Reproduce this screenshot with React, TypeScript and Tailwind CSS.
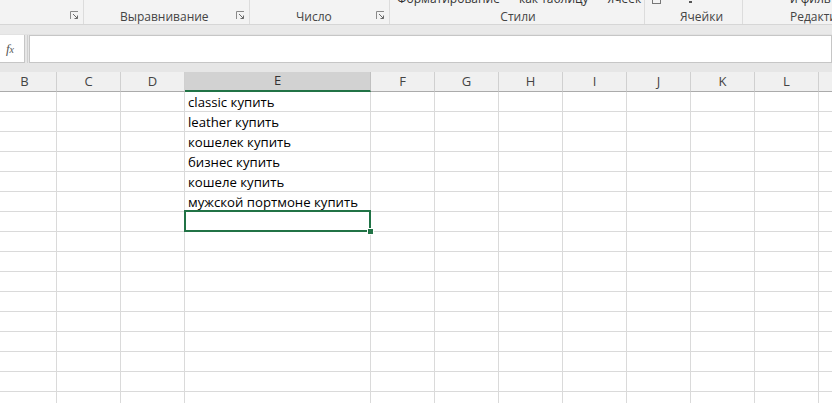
import React from "react";

const cols = [
  { name: "B", w: 64 },
  { name: "C", w: 64 },
  { name: "D", w: 64 },
  { name: "E", w: 186 },
  { name: "F", w: 64 },
  { name: "G", w: 64 },
  { name: "H", w: 64 },
  { name: "I", w: 64 },
  { name: "J", w: 64 },
  { name: "K", w: 64 },
  { name: "L", w: 64 },
  { name: "", w: 64 },
];

const data = [
  "classic купить",
  "leather купить",
  "кошелек купить",
  "бизнес купить",
  "кошеле купить",
  "мужской портмоне купить",
];

function Launcher() {
  return (
    <svg width="9" height="9" viewBox="0 0 9 9" className="shrink-0">
      <path d="M0.5 8 V0.5 H8" stroke="#8a8a8a" strokeWidth="1" fill="none" />
      <path d="M3 3 L7.5 7.5 M7.5 4.5 V7.5 H4.5" stroke="#6a6a6a" strokeWidth="1" fill="none" />
    </svg>
  );
}

const font = { fontFamily: '"Open Sans", "Noto Sans", sans-serif' };

export default function App() {
  const rowCount = 16;
  return (
    <div className="w-[832px] h-[403px] overflow-hidden bg-white" style={font}>
      {/* Ribbon */}
      <div className="h-[25px] bg-[#f3f3f3] border-b border-[#d6d6d6] flex text-[12px] text-[#444] overflow-hidden">
        <div className="w-[84px] shrink-0 border-r border-[#dcdcdc] h-[24px] flex items-end justify-end pr-[4px] pb-[4px]">
          <Launcher />
        </div>
        <div className="w-[166px] shrink-0 border-r border-[#dcdcdc] h-[24px] flex items-end pl-[36px] pr-[4px]">
          <span className="leading-[15px]">Выравнивание</span>
          <span className="ml-auto pb-[4px]"><Launcher /></span>
        </div>
        <div className="w-[140px] shrink-0 border-r border-[#dcdcdc] h-[24px] flex items-end pl-[46px] pr-[4px]">
          <span className="leading-[15px]">Число</span>
          <span className="ml-auto pb-[4px]"><Launcher /></span>
        </div>
        <div className="w-[255px] shrink-0 border-r border-[#dcdcdc] h-[24px] flex flex-col">
          <div className="flex text-[12px] leading-[12px] -mt-[7px] h-[12px] whitespace-nowrap text-[#333]">
            <span className="ml-[7px]">Форматирование</span>
            <span className="ml-[19px]">как таблицу</span>
            <span className="ml-[19px]">ячеек</span>
          </div>
          <div className="flex-1 flex items-end justify-center pl-[2px]">
            <span className="leading-[15px]">Стили</span>
          </div>
        </div>
        <div className="w-[98px] shrink-0 border-r border-[#dcdcdc] h-[24px] flex flex-col">
          <div className="flex items-start h-[5px] overflow-hidden">
            <div className="ml-[7px] -mt-[3px] w-[9px] h-[7px] border border-[#777]" />
            <div className="ml-[28px] mt-[1px] w-[3px] h-[2px] bg-[#555]" />
          </div>
          <div className="flex-1 flex items-end pl-[35px]">
            <span className="leading-[15px]">Ячейки</span>
          </div>
        </div>
        <div className="flex-1 h-[24px] flex flex-col">
          <div className="flex text-[12px] leading-[12px] -mt-[7px] h-[12px] whitespace-nowrap text-[#333] pl-[47px]">
            <span>и фильтр</span>
          </div>
          <div className="flex-1 flex items-end pl-[47px] whitespace-nowrap">
            <span className="leading-[15px]">Редактирование</span>
          </div>
        </div>
      </div>

      {/* band */}
      <div className="h-[10px] bg-[#e9e9e9] border-b border-[#e2e2e2]" />

      {/* formula bar */}
      <div className="h-[37px] bg-[#e6e6e6] flex items-start">
        <div className="w-[25px] h-[28px] bg-white border-r border-b border-[#c6c6c6] flex items-center justify-center">
          <span className="text-[13px] italic text-[#555] -ml-[4px]" style={{ fontFamily: '"Liberation Serif", serif' }}>
            f<span className="text-[10px]">x</span>
          </span>
        </div>
        <div className="w-[4px] h-[28px] flex justify-center">
          <div className="w-[1px] h-full bg-[#d0d0d0]" />
        </div>
        <div className="flex-1 h-[28px] bg-white border border-[#c6c6c6]" />
      </div>

      {/* sheet */}
      <div className="flex flex-col -ml-[7px]">
        {/* header row */}
        <div className="flex h-[20px]">
          {cols.map((c, i) => (
            <div
              key={i}
              className={
                c.name === "E"
                  ? "shrink-0 h-[20px] bg-[#d2d2d2] border-b-2 border-b-[#217346] border-r border-r-[#c0c0c0] flex items-center justify-center text-[13px] text-[#333]"
                  : "shrink-0 h-[20px] bg-[#f0f0f0] border-b border-b-[#ababab] border-r border-r-[#d0d0d0] flex items-center justify-center text-[13px] text-[#444]"
              }
              style={{ width: c.w }}
            >
              {c.name}
            </div>
          ))}
        </div>
        {/* rows */}
        {Array.from({ length: rowCount }).map((_, r) => (
          <div key={r} className="flex h-[20px]">
            {cols.map((c, i) => {
              const isE = c.name === "E";
              const selected = isE && r === 6;
              return (
                <div
                  key={i}
                  className={
                    selected
                      ? "shrink-0 h-[20px] border-r border-b border-[#dadada] relative z-10"
                      : "shrink-0 h-[20px] border-r border-b border-[#dadada] relative"
                  }
                  style={{ width: c.w }}
                >
                  {isE && data[r] ? (
                    <span className="absolute left-[3px] top-[1px] text-[13.2px] leading-[19px] text-black whitespace-nowrap">
                      {data[r]}
                    </span>
                  ) : null}
                  {selected ? (
                    <>
                      <div className="absolute -left-[1px] -top-[2px] -right-[1px] -bottom-[1px] border-2 border-[#217346]" />
                      <div className="absolute -right-[4px] -bottom-[4px] w-[7px] h-[7px] bg-[#217346] border border-white" />
                    </>
                  ) : null}
                </div>
              );
            })}
          </div>
        ))}
      </div>
    </div>
  );
}
